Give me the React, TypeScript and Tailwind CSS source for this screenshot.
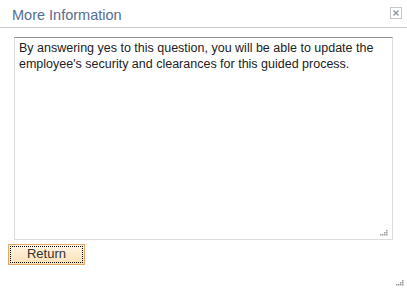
import React from 'react';

// 点阵拖拽角标
function Grip({ color = '#9a9a9a' }: { color?: string }) {
  const dots = [
    [6, 0],
    [4, 2], [6, 2],
    [0, 4], [2, 4], [4, 4], [6, 4],
  ];
  return (
    <svg width="8" height="6" viewBox="0 0 8 6" className="block">
      {dots.map(([x, y]) => (
        <rect key={`${x}-${y}`} x={x} y={y} width="1.5" height="1.5" fill={color} />
      ))}
    </svg>
  );
}

export default function App() {
  return (
    <div
      className="w-[407px] h-[289px] bg-white flex flex-col relative"
      style={{ fontFamily: '"Liberation Sans", Arial, sans-serif' }}
    >
      <div className="flex items-start justify-between h-[28px] border-b border-[#c9c9d1] pl-[12px] pr-[5px]">
        <span className="text-[14.5px] leading-[18px] text-[#566d92] mt-[6px]">More Information</span>
        <button
          type="button"
          className="mt-[7px] w-[12px] h-[12px] border border-[#c8c8c8] flex items-center justify-center bg-white"
        >
          <svg width="6" height="6" viewBox="0 0 6 6">
            <path d="M0.5 0.5 L5.5 5.5 M5.5 0.5 L0.5 5.5" stroke="#8c96a4" strokeWidth="1.4" />
          </svg>
        </button>
      </div>

      <div className="pl-[14px] pr-[14px] pt-[9px]">
        <div className="h-[203px] border border-[#dcdce2] border-t-[#8f8f8f] relative px-[4px] pt-[2px]">
          <p className="text-[12.5px] leading-[16px] text-[#222]">
            By answering yes to this question, you will be able to update the employee's security and clearances for this guided process.
          </p>
          <div className="absolute right-[4px] bottom-[3px]">
            <Grip color="#a0a0a0" />
          </div>
        </div>
      </div>

      <div className="pl-[8px] pt-[1px]">
        <button
          type="button"
          className="w-[77px] h-[21px] border border-[#e2a866] bg-gradient-to-b from-[#fff4e2] to-[#fbe1b6] p-[1px]"
        >
          <span className="flex items-center justify-center w-full h-full border border-dotted border-black text-[13px] leading-[14px] text-[#333]">
            Return
          </span>
        </button>
      </div>

      <div className="absolute right-[3px] bottom-[3px]">
        <Grip color="#999" />
      </div>
    </div>
  );
}
